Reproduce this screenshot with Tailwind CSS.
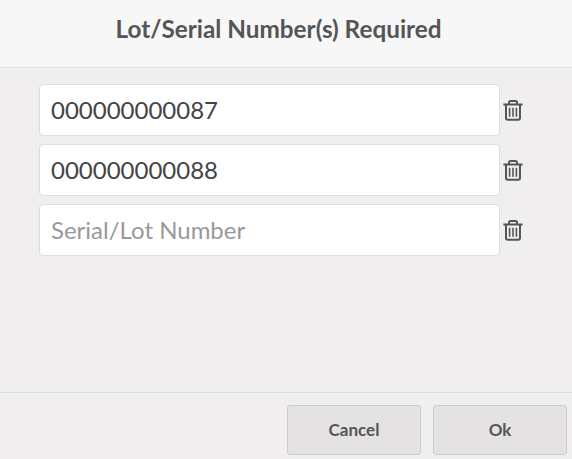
<!DOCTYPE html>
<html lang="en"><head><meta charset="utf-8"><title>Lot/Serial Number(s) Required</title>
<script src="https://cdn.jsdelivr.net/npm/@tailwindcss/browser@4"></script></head>
<body class="flex h-[459px] w-[572px] flex-col overflow-hidden bg-[#f0eeee] font-['Lato',sans-serif] text-[#555555]">
<svg class="hidden"><symbol id="trash" viewBox="0 0 20 24"><g fill="none" stroke="#555555" stroke-width="2"><path d="M.4 6.5h19.2M6 6V4.6Q6 3 7.6 3h4.8Q14 3 14 4.6V6M3 6.3V20q0 1.8 1.8 1.8h10.4q1.8 0 1.8-1.8V6.3"/><path stroke-width="1.6" d="M6.6 9.8v8.9M10 9.8v8.9M13.4 9.8v8.9"/></g></symbol></svg>
<header class="flex h-[68px] shrink-0 justify-center border-b border-[#e0e2e2] bg-[#f7f7f7] pt-[11px] pr-[15px]"><h1 class="text-[24.3px] leading-9 font-bold">Lot/Serial Number(s) Required</h1></header>
<main class="flex h-[324px] shrink-0 flex-col gap-2 pt-4 pl-[39px] text-2xl">
<div class="flex items-center gap-[3px]"><div class="flex h-13 w-[461px] items-center rounded border border-[#dddddd] bg-white px-[11px] text-[#444444]">000000000087</div><svg class="h-6 w-5"><use href="#trash"/></svg></div>
<div class="flex items-center gap-[3px]"><div class="flex h-13 w-[461px] items-center rounded border border-[#dddddd] bg-white px-[11px] text-[#444444]">000000000088</div><svg class="h-6 w-5"><use href="#trash"/></svg></div>
<div class="flex items-center gap-[3px]"><div class="flex h-13 w-[461px] items-center rounded border border-[#dddddd] bg-white px-[11px] text-[#999999]">Serial/Lot Number</div><svg class="h-6 w-5"><use href="#trash"/></svg></div>
</main>
<footer class="flex h-[67px] shrink-0 justify-end gap-3 border-t border-[#dddddd] pt-3 pr-[5px]"><button class="h-[50px] w-[134px] rounded-[3px] border border-[#cccccc] bg-[#e4e2e2] text-[17px] font-bold">Cancel</button><button class="h-[50px] w-[134px] rounded-[3px] border border-[#cccccc] bg-[#e4e2e2] text-[17px] font-bold">Ok</button></footer>
</body></html>
